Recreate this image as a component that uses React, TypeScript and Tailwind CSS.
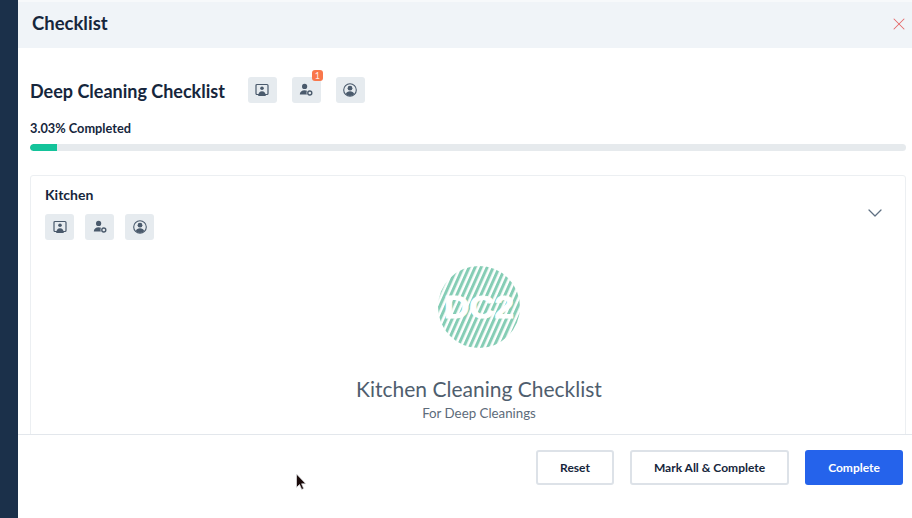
import { ChevronDown, X } from "lucide-react"

function ScreenIcon() {
  return (
    <svg width="14" height="14" viewBox="0 0 14 14" fill="none">
      <rect x="1" y="1.5" width="12" height="10" rx="1" stroke="#4a5a6c" strokeWidth="1.2" />
      <circle cx="7" cy="5.2" r="1.8" fill="#4a5a6c" />
      <path d="M3.2 13c0-3 1.6-4.8 3.8-4.8s3.8 1.8 3.8 4.8z" fill="#4a5a6c" />
    </svg>
  )
}

function UserCogIcon() {
  return (
    <svg width="14" height="14" viewBox="0 0 14 14" fill="none">
      <circle cx="5.6" cy="3.4" r="2.6" fill="#4a5a6c" />
      <path d="M0.8 11.5c0-2.6 2-4.3 4.8-4.3 1 0 1.8.2 2.4.5-.5.9-.6 2.500-.1 3.800z" fill="#4a5a6c" />
      <circle cx="10.800" cy="10" r="2" stroke="#4a5a6c" strokeWidth="1.400" />
    </svg>
  )
}

function UserCircleIcon() {
  return (
    <svg width="14" height="14" viewBox="0 0 14 14" fill="none">
      <circle cx="7" cy="7" r="6.300" stroke="#4a5a6c" strokeWidth="1.100" />
      <circle cx="7" cy="5.200" r="2.400" fill="#4a5a6c" />
      <path d="M2.800 11c.6-1.900 2.200-2.800 4.200-2.800s3.600.9 4.200 2.800c-1 1.200-2.500 1.900-4.200 1.900s-3.200-.7-4.200-1.900z" fill="#4a5a6c" />
    </svg>
  )
}

function IconButton({ children, badge }: { children: React.ReactNode; badge?: string }) {
  return (
    <div className="relative flex h-[26px] w-[29px] items-center justify-center rounded-[3px] bg-[#e6ebef]">
      {children}
      {badge && (
        <span className="absolute -top-[7px] right-[-2px] flex h-[11px] w-[11px] items-center justify-center rounded-[3px] bg-[#f9774b] text-[9px] leading-none text-[#ffeee8]">
          {badge}
        </span>
      )}
    </div>
  )
}

function Logo() {
  return (
    <svg width="82" height="82" viewBox="0 0 82 82">
      <defs>
        <pattern id="stripes" width="5.500" height="5.500" patternUnits="userSpaceOnUse" patternTransform="rotate(24)">
          <rect width="3" height="5.500" fill="#85cdb5" />
        </pattern>
      </defs>
      <circle cx="41" cy="41" r="41" fill="url(#stripes)" />
      <text x="41" y="52" textAnchor="middle" fontFamily="'Liberation Sans', sans-serif" fontWeight="700" fontSize="32" fill="#ffffff" stroke="#ffffff" strokeWidth="1" textLength="70" lengthAdjust="spacingAndGlyphs">
        DC2
      </text>
    </svg>
  )
}

export default function App() {
  return (
    <div className="relative flex h-[518px] w-[912px] overflow-hidden bg-white font-['Lato',sans-serif] text-[#16263c]">
      <div className="w-[18px] shrink-0 bg-[#1b304a]" />

      <div className="flex min-w-0 flex-1 flex-col">
        <div className="flex h-[48px] shrink-0 items-center justify-between border-t-2 border-[#f7f9fb] bg-[#f0f4f8] pb-[3px] pl-[14px] pr-[3px]">
          <h1 className="text-[18.500px] font-bold leading-none">Checklist</h1>
          <X className="h-[20px] w-[20px] text-[#e5696b]" strokeWidth={1.25} />
        </div>

        <div className="min-h-0 flex-1 overflow-hidden pl-[12px] pr-[6px]">
          <div className="mt-[29px] flex items-start">
            <h2 className="text-[18px] font-bold leading-[28px]">Deep Cleaning Checklist</h2>
            <div className="ml-[23px] flex gap-[15px]">
              <IconButton><ScreenIcon /></IconButton>
              <IconButton badge="1"><UserCogIcon /></IconButton>
              <IconButton><UserCircleIcon /></IconButton>
            </div>
          </div>

          <p className="mt-[15px] text-[12.750px] font-bold leading-[16px]">3.03% Completed</p>
          <div className="mt-[8px] h-[7px] w-full overflow-hidden rounded-full bg-[#e6eaed]">
            <div className="h-full w-[3.030%] rounded-l-full bg-[#14c39a]" />
          </div>

          <div className="mt-[24px] h-[300px] rounded-t-[3px] border border-[#eceff2] pl-[14px] pt-[10px]">
            <div className="flex items-center justify-between pr-[18px]">
              <div>
                <h3 className="text-[14px] font-bold leading-[18px]">Kitchen</h3>
                <div className="mt-[10px] flex gap-[11px]">
                  <IconButton><ScreenIcon /></IconButton>
                  <IconButton><UserCogIcon /></IconButton>
                  <IconButton><UserCircleIcon /></IconButton>
                </div>
              </div>
              <ChevronDown className="h-[24px] w-[24px] text-[#5f7082]" strokeWidth={1.25} />
            </div>

            <div className="mt-[26px] flex flex-col items-center pl-[8px]">
              <Logo />
              <p className="mt-[26px] text-[21px] leading-[30px] text-[#4f5e6e]">Kitchen Cleaning Checklist</p>
              <p className="mt-[1px] text-[13.300px] leading-[16px] text-[#5d6b7a]">For Deep Cleanings</p>
            </div>
          </div>
        </div>

        <div className="flex h-[84px] shrink-0 items-start justify-end gap-[16px] border-t border-[#e3e7ec] bg-white pr-[9px] pt-[15px]">
          <button className="h-[35px] w-[78px] rounded-[3px] border-2 border-[#dde2e8] text-[12px] font-bold">Reset</button>
          <button className="h-[35px] w-[159px] rounded-[3px] border-2 border-[#dde2e8] text-[12px] font-bold">Mark All &amp; Complete</button>
          <button className="h-[35px] w-[98px] rounded-[3px] bg-[#2563eb] text-[12px] font-bold text-white">Complete</button>
        </div>
      </div>

      <svg className="absolute left-[295px] top-[473px]" width="13" height="19" viewBox="0 0 13 19">
        <path d="M1.500 1v13.500l3-3 2.200 5 2-.9-2.100-4.800h4.200z" fill="#1a0b0b" stroke="#e5e7ea" strokeWidth="0.700" />
      </svg>
    </div>
  )
}
